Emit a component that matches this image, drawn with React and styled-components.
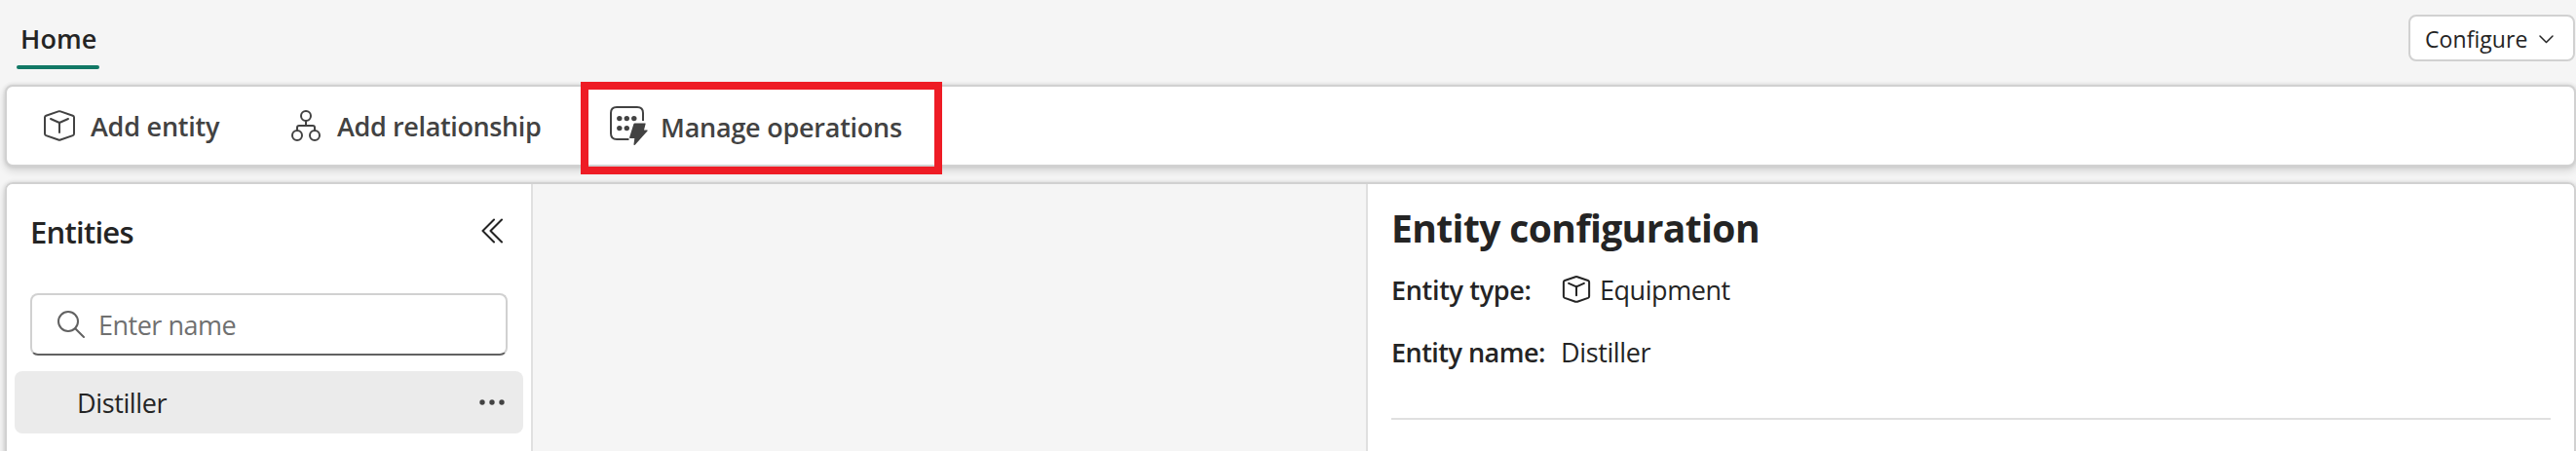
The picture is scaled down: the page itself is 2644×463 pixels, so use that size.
import React from 'react';
import styled, { createGlobalStyle } from 'styled-components';

const GlobalStyle = createGlobalStyle`
  *, *::before, *::after { box-sizing: border-box; }
  html, body { margin: 0; background: #f5f5f5; overflow: hidden; }
  body, button, input { font-family: 'Open Sans', 'Noto Sans', sans-serif; }
`;

const Page = styled.div`
  display: flex;
  flex-direction: column;
  width: 100%;
  height: 463px;
  overflow: hidden;
  background: #f5f5f5;
  color: #242424;
  font-size: 27px;
`;

const Header = styled.header`
  display: flex;
  justify-content: space-between;
  align-items: flex-start;
  flex: none;
  height: 87px;
  padding: 15px 1px 0 17px;
`;

const Tab = styled.div`
  display: flex;
  flex-direction: column;
  width: 85px;
  height: 56px;
  padding: 4px 0 0 4px;
  font-weight: 600;
  line-height: 41px;
  letter-spacing: 0.1px;
  white-space: nowrap;

  &::after {
    content: '';
    height: 4px;
    margin: auto 0 0 -4px;
    border-radius: 2px;
    background: #117865;
  }
`;

const ConfigureButton = styled.button`
  display: flex;
  align-items: center;
  justify-content: space-between;
  width: 171px;
  height: 48px;
  padding: 2px 20px 0 15px;
  border: 2px solid #d1d1d1;
  border-radius: 8px;
  background: #fff;
  color: #242424;
  font-size: 23px;
  line-height: 42px;
  letter-spacing: 0.067px;
`;

const surface = `
  border: 2px solid #d1d1d1;
  border-radius: 8px;
  box-shadow: 0 0 4px rgba(0, 0, 0, 0.12), 0 4px 8px rgba(0, 0, 0, 0.14);
`;

const Toolbar = styled.nav`
  ${surface}
  display: flex;
  flex: none;
  height: 84px;
  margin-left: 5px;
  padding-left: 38px;
  background: #fff;
`;

const ToolButton = styled.button`
  position: relative;
  display: flex;
  align-items: center;
  flex: none;
  gap: ${(p) => p.$gap}px;
  width: ${(p) => p.$width}px;
  height: 80px;
  padding: 0;
  border: 0;
  background: none;
  color: #424242;
  font-size: 27px;
  font-weight: 600;
  line-height: 40px;
  letter-spacing: ${(p) => p.$tracking}px;
  white-space: nowrap;
`;

const ToolLabel = styled.span`
  padding-top: ${(p) => p.$drop || 2}px;
`;

const Highlight = styled.span`
  position: absolute;
  inset: -5px auto auto -30px;
  width: 371px;
  height: 95px;
  border: 8px solid #ee1c25;
`;

const Workspace = styled.main`
  ${surface}
  display: flex;
  flex: none;
  height: 300px;
  margin: 16px 0 0 5px;
  overflow: hidden;
`;

const EntityPanel = styled.aside`
  flex: none;
  width: 540px;
  border-right: 2px solid #e0e0e0;
  background: #fff;
`;

const PanelHeader = styled.div`
  display: flex;
  align-items: center;
  justify-content: space-between;
  height: 112px;
  padding: 0 29px 16px 24px;
`;

const PanelTitle = styled.h2`
  margin: 0;
  padding-top: 2px;
  font-size: 31px;
  font-weight: 600;
  line-height: 42px;
  letter-spacing: -0.74px;
`;

const SearchBox = styled.label`
  display: flex;
  align-items: center;
  gap: 14px;
  width: 490px;
  height: 64px;
  margin-left: 24px;
  padding-left: 26px;
  border: 2px solid #d1d1d1;
  border-bottom-color: #616161;
  border-radius: 8px;
`;

const SearchInput = styled.input`
  width: 400px;
  padding: 2px 0 0;
  border: 0;
  outline: 0;
  background: none;
  font-size: 27px;
  line-height: 40px;
  letter-spacing: -0.495px;
  color: #707070;

  &::placeholder { color: #707070; opacity: 1; }
`;

const EntityRow = styled.div`
  display: flex;
  align-items: center;
  justify-content: space-between;
  width: 522px;
  height: 64px;
  margin: 16px 0 0 8px;
  padding: 0 19px 0 64px;
  border-radius: 8px;
  background: #ebebeb;
  line-height: 40px;
  letter-spacing: -0.376px;
`;

const EntityLabel = styled.span`
  padding-top: 2px;
`;

const Canvas = styled.section`
  flex: none;
  width: 855px;
  background: #f5f5f5;
`;

const ConfigPanel = styled.section`
  flex: 1;
  padding: 18px 24px 0;
  border-left: 2px solid #e0e0e0;
  background: #fff;
`;

const ConfigTitle = styled.h1`
  margin: 0 0 4px;
  font-size: 39px;
  font-weight: 700;
  line-height: 54px;
  letter-spacing: -0.6px;
`;

const Field = styled.div`
  display: flex;
  align-items: center;
  height: 64px;
  line-height: 40px;
`;

const FieldLabel = styled.span`
  width: 176px;
  padding-top: 2px;
  font-weight: 600;
  letter-spacing: ${(p) => p.$tracking}px;
  white-space: nowrap;
`;

const FieldValue = styled.span`
  padding-top: 2px;
  margin-left: ${(p) => p.$offset}px;
  letter-spacing: ${(p) => p.$tracking}px;
`;

const Divider = styled.hr`
  height: 2px;
  margin: 36px 0 0;
  border: 0;
  background: #e0e0e0;
`;

const Icon = styled.svg`
  display: block;
  flex: none;
  overflow: visible;
  fill: none;
  stroke: currentColor;
  stroke-width: ${(p) => p.$stroke || 2};
  stroke-linecap: round;
  stroke-linejoin: round;
`;

const BoxIcon = ({ size = 32, stroke = 2 }) => (
  <Icon width={size} height={size} viewBox="0 0 32 32" $stroke={stroke}>
    <path d="M14.9 1.4Q16 1 17.1 1.4L29.7 5.7Q31 6.2 31 7.6V24.2Q31 25.6 29.7 26.1L17.1 30.5Q16 30.9 14.9 30.5L2.3 26.1Q1 25.6 1 24.2V7.6Q1 6.2 2.3 5.7Z" />
    <path d="M7 9L16 13L25 9M16 13V23" />
  </Icon>
);

const RelationshipIcon = () => (
  <Icon width="32" height="32" viewBox="0 0 32 32">
    <circle cx="16" cy="6" r="5" />
    <circle cx="7" cy="26" r="5" />
    <circle cx="25" cy="26" r="5" />
    <path d="M16 11V16M7 21V18Q7 16 9 16H23Q25 16 25 18V21" />
  </Icon>
);

const OperationsIcon = () => (
  <Icon width="40" height="40" viewBox="0 0 40 40">
    <path d="M34 15V7Q34 1 28 1H7Q1 1 1 7V28Q1 34 7 34H19.5" strokeLinecap="butt" />
    <g fill="currentColor" stroke="none">
      <circle cx="9.8" cy="12.6" r="2.7" />
      <circle cx="17.3" cy="12.6" r="2.7" />
      <circle cx="24.8" cy="12.6" r="2.7" />
      <circle cx="9.8" cy="22.6" r="2.7" />
      <circle cx="17.3" cy="22.6" r="2.7" />
      <path d="M25.4 17.6H36.3Q36.8 17.6 36.6 18.2L35 24.4H38Q39.3 24.4 38.5 25.6L26 39.4Q24.4 40.7 24.5 39L25.3 33H20.7Q19.7 33 20.1 32L24.4 18.3Q24.7 17.6 25.4 17.6Z" />
    </g>
  </Icon>
);

const ChevronDown = () => (
  <Icon width="15" height="9" viewBox="0 0 15 9" $stroke={1.5}>
    <path d="M1 1L7.5 7.5L14 1" />
  </Icon>
);

const CollapseIcon = () => (
  <Icon width="22" height="26" viewBox="0 0 22 26">
    <path d="M13 1.5L1.5 13L13 24.5M21 1.5L9.5 13L21 24.5" />
  </Icon>
);

const SearchIcon = () => (
  <Icon width="28" height="28" viewBox="0 0 28 28" color="#616161">
    <circle cx="11" cy="11" r="10" />
    <path d="M18.2 18.2L27 27" />
  </Icon>
);

const MoreIcon = () => (
  <Icon width="26" height="6" viewBox="0 0 26 6">
    <g fill="#424242" stroke="none">
      <circle cx="3" cy="3" r="2.7" />
      <circle cx="13" cy="3" r="2.7" />
      <circle cx="23" cy="3" r="2.7" />
    </g>
  </Icon>
);

export default function App() {
  return (
    <>
      <GlobalStyle />
      <Page>
        <Header>
          <Tab>Home</Tab>
          <ConfigureButton>
            Configure
            <ChevronDown />
          </ConfigureButton>
        </Header>

        <Toolbar>
          <ToolButton $gap={16} $width={253} $tracking={-0.23}>
            <BoxIcon />
            <ToolLabel>Add entity</ToolLabel>
          </ToolButton>
          <ToolButton $gap={16} $width={328} $tracking={-0.37}>
            <RelationshipIcon />
            <ToolLabel>Add relationship</ToolLabel>
          </ToolButton>
          <ToolButton $gap={12} $width={330} $tracking={-0.243}>
            <OperationsIcon />
            <ToolLabel $drop={4}>Manage operations</ToolLabel>
            <Highlight />
          </ToolButton>
        </Toolbar>

        <Workspace>
          <EntityPanel>
            <PanelHeader>
              <PanelTitle>Entities</PanelTitle>
              <CollapseIcon />
            </PanelHeader>
            <SearchBox>
              <SearchIcon />
              <SearchInput placeholder="Enter name" />
            </SearchBox>
            <EntityRow>
              <EntityLabel>Distiller</EntityLabel>
              <MoreIcon />
            </EntityRow>
          </EntityPanel>
          <Canvas />
          <ConfigPanel>
            <ConfigTitle>Entity configuration</ConfigTitle>
            <Field>
              <FieldLabel $tracking={-0.324}>Entity type:</FieldLabel>
              <BoxIcon size={28} stroke={2.3} />
              <FieldValue $offset={10} $tracking={-0.454}>Equipment</FieldValue>
            </Field>
            <Field>
              <FieldLabel $tracking={-0.518}>Entity name:</FieldLabel>
              <FieldValue $offset={-2} $tracking={-0.376}>Distiller</FieldValue>
            </Field>
            <Divider />
          </ConfigPanel>
        </Workspace>
      </Page>
    </>
  );
}
